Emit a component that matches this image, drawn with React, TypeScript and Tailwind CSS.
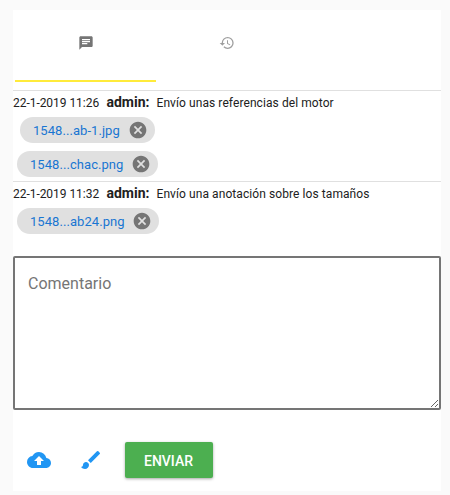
import { MdBrush, MdCancel, MdChat, MdCloudUpload, MdHistory } from "react-icons/md";

function Chip({ name, className }: { name: string; className: string }) {
  return (
    <div className={`flex h-[26px] items-center justify-between rounded-full bg-[#e0e0e0] pl-[13px] ${className}`}>
      <a className="pt-px text-[13px] leading-[25px] tracking-[0.06px] whitespace-nowrap text-[#1976d2]">{name}</a>
      <button type="button" className="text-[#757575]">
        <MdCancel size={20} />
      </button>
    </div>
  );
}

function Message({ date, text }: { date: string; text: string }) {
  return (
    <p className="flex h-[26px] items-baseline whitespace-nowrap text-[12px] leading-[22px] text-[#212121]">
      <span className="w-[93.5px] tracking-[-0.04px]">{date}</span>
      <strong className="w-[50px] text-[14px] font-bold">admin:</strong>
      <span className="tracking-[0.08px]">{text}</span>
    </p>
  );
}

export default function App() {
  return (
    <main className="h-[495px] w-[450px] bg-[#fafafa] pt-[10px] pl-[13px] font-[Roboto,sans-serif]">
      <section className="h-[481px] w-[428px] bg-white">
        <nav className="flex h-20 pl-[2px]">
          <button type="button" className="flex h-[72px] w-[141px] items-center justify-center border-b-2 border-[#ffeb3b] pb-1 text-[#757575]">
            <MdChat size={16} />
          </button>
          <button type="button" className="flex h-[72px] w-[142px] items-center justify-center pb-[6px] text-[#9e9e9e]">
            <MdHistory size={16} />
          </button>
        </nav>
        <article className="h-[91px] border-t border-[#e0e0e0]">
          <Message date="22-1-2019 11:26" text="Envío unas referencias del motor" />
          <Chip name="1548...ab-1.jpg" className="ml-[7px] w-[135px] pr-[7px]" />
          <Chip name="1548...chac.png" className="mt-2 ml-[4px] w-[141px] pr-[7px]" />
        </article>
        <article className="h-[75px] border-t border-[#e0e0e0]">
          <Message date="22-1-2019 11:32" text="Envío una anotación sobre los tamaños" />
          <Chip name="1548...ab24.png" className="ml-[4px] w-[142px] pr-[7px]" />
        </article>
        <textarea
          placeholder="Comentario"
          className="block h-[154px] w-full resize rounded-[2px] border-2 border-[#757575] bg-white px-[13px] pt-[14px] text-[16px] leading-6 placeholder:text-[#757575]"
        />
        <div className="mt-8 flex h-9 items-center pl-[14px]">
          <button type="button" className="text-[#2196f3]">
            <MdCloudUpload size={24} />
          </button>
          <button type="button" className="ml-7 text-[#2196f3]">
            <MdBrush size={24} />
          </button>
          <button
            type="button"
            className="ml-[22px] h-9 w-[88px] rounded-[2px] bg-[#4caf50] pt-[2px] pr-px text-[14px] font-medium text-white shadow-[0_1px_3px_rgba(0,0,0,0.35)]"
          >
            ENVIAR
          </button>
        </div>
      </section>
    </main>
  );
}
